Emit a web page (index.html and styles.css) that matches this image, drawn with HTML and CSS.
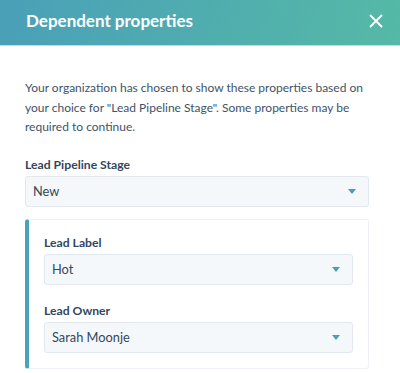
FILE: index.html
```html
<!DOCTYPE html>
<html lang="en">
  <head>
    <meta charset="UTF-8" />
    <meta name="viewport" content="width=device-width, initial-scale=1.0" />
    <title>Dependent properties</title>
    <link rel="stylesheet" href="styles.css">
  </head>
  <body>
    <header class="panel-header">
      <h1 class="panel-title">Dependent properties</h1>
      <button class="close-btn" aria-label="Close">
        <svg width="14" height="14" viewBox="0 0 14 14">
          <path d="M1.5 1.5 L12.5 12.5 M12.5 1.5 L1.5 12.5" stroke="#fff" stroke-width="1.8" stroke-linecap="round" />
        </svg>
      </button>
    </header>
    <main class="panel-body">
      <p class="intro">
        Your organization has chosen to show these properties based on
        your choice for "Lead Pipeline Stage". Some properties may be
        required to continue.
      </p>

      <div class="field">
        <label class="field-label">Lead Pipeline Stage</label>
        <div class="select">
          <span>New</span>
          <span class="caret"></span>
        </div>
      </div>

      <div class="dependent-card">
        <div class="field">
          <label class="field-label">Lead Label</label>
          <div class="select">
            <span>Hot</span>
            <span class="caret"></span>
          </div>
        </div>
        <div class="field">
          <label class="field-label">Lead Owner</label>
          <div class="select">
            <span>Sarah Moonje</span>
            <span class="caret"></span>
          </div>
        </div>
      </div>
    </main>
  </body>
</html>
```

FILE: styles.css
```css
html,
body {
  margin: 0;
  padding: 0;
  background-color: #fff;
  font-family: Lato, "Noto Sans", sans-serif;
  color: #33475b;
}

/* Header with gradient */
.panel-header {
  height: 46px;
  box-sizing: border-box;
  display: flex;
  align-items: center;
  justify-content: space-between;
  padding: 0 17px 4px 26px;
  background: linear-gradient(100deg, #4aa0b8, #55b9a6);
  border-bottom: 1px solid #b9e1dd;
}

.panel-title {
  margin: 0;
  font-size: 17px;
  font-weight: 700;
  color: #fff;
}

.close-btn {
  background: none;
  border: none;
  padding: 0;
  width: 14px;
  height: 14px;
  cursor: pointer;
  display: flex;
}

.panel-body {
  padding: 32px 31px 0 25px;
}

.intro {
  margin: 0 0 20px 0;
  font-size: 12px;
  line-height: 19.5px;
  color: #3e5368;
}

.field-label {
  display: block;
  font-size: 12.2px;
  line-height: 15px;
  font-weight: 700;
  margin-bottom: 4px;
}

.field {
  margin-bottom: 18px;
}

.select {
  height: 29px;
  display: flex;
  align-items: center;
  justify-content: space-between;
  padding: 0 12px 0 7px;
  background-color: #f5f8fa;
  border: 1px solid #e3e8ef;
  border-radius: 3px;
  font-size: 12.8px;
}

.caret {
  width: 0;
  height: 0;
  border-left: 4.5px solid transparent;
  border-right: 4.5px solid transparent;
  border-top: 5px solid #4a9fb5;
}

.field.top {
  margin-bottom: 12px;
}

.dependent-card {
  margin-top: -6px;
  border: 1px solid #eef1f5;
  border-left: 4px solid #4aa3b8;
  border-radius: 3px;
  padding: 15px;
}

.dependent-card .field:last-child {
  margin-bottom: 0;
}
```
